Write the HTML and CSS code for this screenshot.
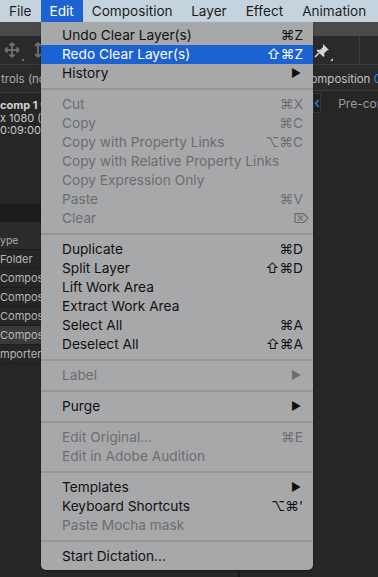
FILE: index.html
```html
<!DOCTYPE html>
<html lang="en">
  <head>
    <meta charset="utf-8">
    <title>Edit menu</title>
    <link rel="stylesheet" href="styles.css">
  </head>
  <body>
    <div class="menubar">
      <span class="mb-item">File</span>
      <span class="mb-item active">Edit</span>
      <span class="mb-item">Composition</span>
      <span class="mb-item">Layer</span>
      <span class="mb-item">Effect</span>
      <span class="mb-item">Animation</span>
    </div>

    <div class="workspace">
      <div class="band"></div>
      <div class="toolbar">
        <div class="tools-left">
          <span class="tool">
            <svg width="18" height="16" viewBox="0 0 18 16">
              <path d="M9 1v14M2 8h14M9 1l-2.5 2.5M9 1l2.5 2.5M9 15l-2.5-2.5M9 15l2.5-2.5M2 8l2.5-2.5M2 8l2.5 2.5M16 8l-2.5-2.5M16 8l-2.5 2.5" stroke="#6f6f6f" stroke-width="1.8" fill="none"/>
            </svg>
            <i class="corner"></i>
          </span>
          <span class="tool">
            <svg width="10" height="16" viewBox="0 0 10 16">
              <path d="M5 1v14M5 1L2 4M5 1l3 3M5 15l-3-3M5 15l3-3" stroke="#6f6f6f" stroke-width="1.8" fill="none"/>
            </svg>
          </span>
        </div>
        <div class="tools-right">
          <span class="tool">
            <svg width="16" height="15" viewBox="0 0 16 15">
              <path d="M9 1l6 6-2 0.5-3 3 0.5 2.5-1 1L2.5 7.5l1-1 2.5 0.5 3-3z" fill="#d6d6d6"/>
              <path d="M5 10L1 14" stroke="#d6d6d6" stroke-width="1.6"/>
            </svg>
            <i class="corner light"></i>
          </span>
          <span class="vdiv"></span>
        </div>
      </div>

      <div class="panels">
        <div class="panel-left">
          <div class="tab-head"><span class="cut">trols (none)</span></div>
          <div class="info">
            <span class="cut info-title">comp 1 ▾</span>
            <span class="cut">x 1080 (1.00)</span>
            <span class="cut">0:09:00, 25.00 fps</span>
          </div>
          <div class="search"></div>
          <div class="table-head"><span class="cut">ype</span></div>
          <div class="row"><span class="cut">Folder</span></div>
          <div class="row"><span class="cut">Composition</span></div>
          <div class="row"><span class="cut">Composition</span></div>
          <div class="row"><span class="cut">Composition</span></div>
          <div class="row selected"><span class="cut">Composition</span></div>
          <div class="row"><span class="cut">mporterJPEG</span></div>
        </div>
        <div class="panel-divider"></div>
        <div class="panel-right">
          <div class="comp-head">Composition <span class="comp-name">Comp 1</span></div>
          <div class="crumbs">
            <span class="back">&lsaquo;</span>
            <span class="crumb">Pre-comp 1</span>
          </div>
        </div>
      </div>
    </div>

    <div class="menu">
      <div class="item"><span>Undo Clear Layer(s)</span><span class="key">⌘Z</span></div>
      <div class="item hover"><span>Redo Clear Layer(s)</span><span class="key">⇧⌘Z</span></div>
      <div class="item"><span>History</span><span class="arrow">▶</span></div>
      <div class="sep"></div>
      <div class="item off"><span>Cut</span><span class="key">⌘X</span></div>
      <div class="item off"><span>Copy</span><span class="key">⌘C</span></div>
      <div class="item off"><span>Copy with Property Links</span><span class="key">⌥⌘C</span></div>
      <div class="item off"><span>Copy with Relative Property Links</span></div>
      <div class="item off"><span>Copy Expression Only</span></div>
      <div class="item off"><span>Paste</span><span class="key">⌘V</span></div>
      <div class="item off"><span>Clear</span><span class="key del">⌦</span></div>
      <div class="sep"></div>
      <div class="item"><span>Duplicate</span><span class="key">⌘D</span></div>
      <div class="item"><span>Split Layer</span><span class="key">⇧⌘D</span></div>
      <div class="item"><span>Lift Work Area</span></div>
      <div class="item"><span>Extract Work Area</span></div>
      <div class="item"><span>Select All</span><span class="key">⌘A</span></div>
      <div class="item"><span>Deselect All</span><span class="key">⇧⌘A</span></div>
      <div class="sep"></div>
      <div class="item off"><span>Label</span><span class="arrow">▶</span></div>
      <div class="sep"></div>
      <div class="item"><span>Purge</span><span class="arrow">▶</span></div>
      <div class="sep"></div>
      <div class="item off"><span>Edit Original...</span><span class="key">⌘E</span></div>
      <div class="item off"><span>Edit in Adobe Audition</span></div>
      <div class="sep"></div>
      <div class="item"><span>Templates</span><span class="arrow">▶</span></div>
      <div class="item"><span>Keyboard Shortcuts</span><span class="key">⌥⌘'</span></div>
      <div class="item off"><span>Paste Mocha mask</span></div>
      <div class="sep"></div>
      <div class="item"><span>Start Dictation...</span></div>
    </div>
  </body>
</html>
```

FILE: styles.css
```css
/* page frame */
body {
    margin: 0;
    width: 378px;
    height: 577px;
    overflow: hidden;
    position: relative;
    background-color: #262626;
    font-family: Inter, "DejaVu Sans", sans-serif;
}

/* top system menu bar */
.menubar {
    height: 22px;
    display: flex;
    background-color: #c5d3df;
    font-size: 13.6px;
    line-height: 22px;
    color: #1d1d1d;
}
.mb-item {
    padding: 0 9px;
    white-space: nowrap;
}
.mb-item:nth-child(n+4) {
    padding: 0 9.5px;
}
.mb-item.active {
    background-color: #1c62d2;
    color: #fff;
}

/* app behind the menu */
.workspace {
    display: flex;
    flex-direction: column;
    font-size: 11px;
    color: #ababab;
}
.band {
    height: 14px;
    background-color: #4a4a4a;
}
.toolbar {
    height: 28px;
    display: flex;
    justify-content: space-between;
    align-items: center;
    background-color: #2a2a2a;
    border-bottom: 1px solid #3b3b3b;
}
.tools-left {
    display: flex;
    align-items: center;
    gap: 12px;
    padding-left: 3px;
}
.tools-right {
    display: flex;
    align-items: center;
    height: 100%;
    padding-right: 18px;
}
.tool {
    position: relative;
    display: flex;
}
.corner {
    position: absolute;
    right: -3px;
    bottom: -3px;
    width: 0;
    height: 0;
    border-left: 3px solid transparent;
    border-bottom: 3px solid #6f6f6f;
}
.corner.light {
    border-bottom-color: #bdbdbd;
}
.vdiv {
    width: 1px;
    height: 100%;
    margin-left: 29px;
    background-color: #3c3c3c;
}

.panels {
    display: flex;
    height: 512px;
}
.panel-left {
    width: 238px;
    flex-shrink: 0;
    display: flex;
    flex-direction: column;
    background-color: #262626;
}
.panel-divider {
    width: 2px;
    flex-shrink: 0;
    background-color: #1a1a1a;
}
.panel-right {
    flex: 1;
    min-width: 0;
    overflow: hidden;
    background-color: #262626;
}

/* only the strip left of the menu shows */
.cut {
    display: block;
    width: 41px;
    overflow: hidden;
    white-space: nowrap;
}

.tab-head {
    height: 27px;
    line-height: 28px;
    padding-left: 1px;
    background-color: #2a2a2a;
    border-bottom: 1px solid #3a3a3a;
    font-size: 11.5px;
}
.info {
    padding-top: 6px;
    height: 105px;
    line-height: 12.5px;
    color: #c8c8c8;
}
.info-title {
    font-weight: bold;
    color: #d2d2d2;
}
.search {
    height: 18px;
    background-color: #1c1c1c;
}
.table-head {
    box-sizing: border-box;
    height: 28px;
    padding-top: 10px;
    line-height: 18px;
    background-color: #2b2b2b;
    border-bottom: 1px solid #1b1b1b;
    font-size: 10.5px;
}
.row {
    height: 18px;
    line-height: 18px;
    border-bottom: 1px solid #1d1d1d;
    color: #b8b8b8;
}
.row.selected {
    background-color: #3a3a3a;
}

.comp-head {
    height: 25px;
    line-height: 28px;
    padding-left: 62px;
    background-color: #2a2a2a;
    border-bottom: 1px solid #3a3a3a;
    white-space: nowrap;
    color: #c4c4c4;
    font-size: 11.5px;
}
.comp-name {
    color: #2d8ceb;
}
.crumbs {
    display: flex;
    align-items: center;
    gap: 17px;
    margin-top: 3px;
    padding-left: 73px;
    height: 18px;
    white-space: nowrap;
}
.back {
    width: 15px;
    height: 18px;
    line-height: 17px;
    text-align: center;
    background-color: #1e1e1e;
    border: 1px solid #343434;
    color: #2d8ceb;
    font-size: 16px;
}
.crumb {
    color: #9d9d9d;
    font-size: 12px;
}

/* the open Edit menu */
.menu {
    position: absolute;
    left: 41px;
    top: 22px;
    width: 272px;
    padding: 4px 0;
    background-color: #a7a8aa;
    border-radius: 0 0 5px 5px;
    box-shadow: 0 1px 2px rgba(0,0,0,0.4);
    font-size: 13.7px;
    color: #111;
}
.item {
    height: 19px;
    line-height: 19px;
    display: flex;
    justify-content: space-between;
    padding: 0 10px 0 21px;
    white-space: nowrap;
}
.item.hover {
    background-color: #1c62d2;
    color: #fff;
}
.item.off {
    color: #6c6d6f;
}
.key.del {
    margin-right: -7px;
}
.arrow {
    font-size: 11px;
    margin-right: 2px;
}
.sep {
    height: 2px;
    margin: 5px 0;
    background-color: #949597;
}
```
